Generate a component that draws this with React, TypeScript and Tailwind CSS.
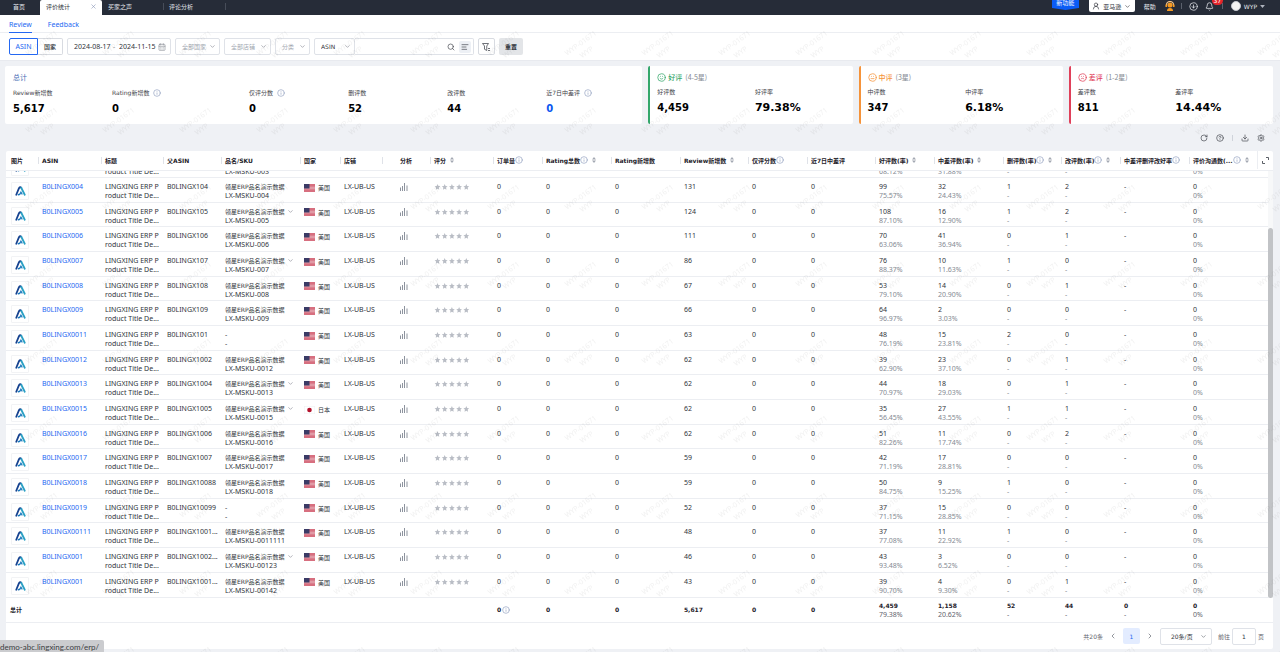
import React from "react";
import {
  Bell,
  ChevronDown,
  ChevronLeft,
  ChevronRight,
  CalendarDays,
  CircleArrowDown,
  CircleHelp,
  Download,
  Frown,
  Info,
  Meh,
  RotateCw,
  Search,
  Settings,
  Smile,
  TextAlignStart,
  UserRound,
  X,
} from "lucide-react";

type Row = {
  asin: string;
  parent: string;
  sku: string;
  more?: boolean;
  jp?: boolean;
  review: string;
  good: string[];
  bad: string[];
  del: string;
  edit: string;
};

const rows: Row[] = [
  {asin: "B0LINGX003", parent: "B0LINGX103", sku: "LX-MSKU-003", review: "138", good: ["94", "68.12%"], bad: ["44", "31.88%"], del: "1", edit: "1"},
  {asin: "B0LINGX004", parent: "B0LINGX104", sku: "LX-MSKU-004", review: "131", good: ["99", "75.57%"], bad: ["32", "24.43%"], del: "1", edit: "2"},
  {asin: "B0LINGX005", parent: "B0LINGX105", sku: "LX-MSKU-005", more: true, review: "124", good: ["108", "87.10%"], bad: ["16", "12.90%"], del: "1", edit: "2"},
  {asin: "B0LINGX006", parent: "B0LINGX106", sku: "LX-MSKU-006", review: "111", good: ["70", "63.06%"], bad: ["41", "36.94%"], del: "0", edit: "1"},
  {asin: "B0LINGX007", parent: "B0LINGX107", sku: "LX-MSKU-007", more: true, review: "86", good: ["76", "88.37%"], bad: ["10", "11.63%"], del: "1", edit: "0"},
  {asin: "B0LINGX008", parent: "B0LINGX108", sku: "LX-MSKU-008", review: "67", good: ["53", "79.10%"], bad: ["14", "20.90%"], del: "0", edit: "1"},
  {asin: "B0LINGX009", parent: "B0LINGX109", sku: "LX-MSKU-009", review: "66", good: ["64", "96.97%"], bad: ["2", "3.03%"], del: "0", edit: "0"},
  {asin: "B0LINGX0011", parent: "B0LINGX101", sku: "", review: "63", good: ["48", "76.19%"], bad: ["15", "23.81%"], del: "2", edit: "0"},
  {asin: "B0LINGX0012", parent: "B0LINGX1002", sku: "LX-MSKU-0012", review: "62", good: ["39", "62.90%"], bad: ["23", "37.10%"], del: "0", edit: "1"},
  {asin: "B0LINGX0013", parent: "B0LINGX1004", sku: "LX-MSKU-0013", more: true, review: "62", good: ["44", "70.97%"], bad: ["18", "29.03%"], del: "0", edit: "1"},
  {asin: "B0LINGX0015", parent: "B0LINGX1005", sku: "LX-MSKU-0015", more: true, jp: true, review: "62", good: ["35", "56.45%"], bad: ["27", "43.55%"], del: "1", edit: "1"},
  {asin: "B0LINGX0016", parent: "B0LINGX1006", sku: "LX-MSKU-0016", review: "62", good: ["51", "82.26%"], bad: ["11", "17.74%"], del: "0", edit: "2"},
  {asin: "B0LINGX0017", parent: "B0LINGX1007", sku: "LX-MSKU-0017", review: "59", good: ["42", "71.19%"], bad: ["17", "28.81%"], del: "0", edit: "0"},
  {asin: "B0LINGX0018", parent: "B0LINGX10088", sku: "LX-MSKU-0018", review: "59", good: ["50", "84.75%"], bad: ["9", "15.25%"], del: "1", edit: "0"},
  {asin: "B0LINGX0019", parent: "B0LINGX10099", sku: "", review: "52", good: ["37", "71.15%"], bad: ["15", "28.85%"], del: "0", edit: "0"},
  {asin: "B0LINGX00111", parent: "B0LINGX1001...", sku: "LX-MSKU-0011111", review: "48", good: ["37", "77.08%"], bad: ["11", "22.92%"], del: "1", edit: "0"},
  {asin: "B0LINGX001", parent: "B0LINGX1002...", sku: "LX-MSKU-00123", more: true, review: "46", good: ["43", "93.48%"], bad: ["3", "6.52%"], del: "0", edit: "0"},
  {asin: "B0LINGX001", parent: "B0LINGX1001...", sku: "LX-MSKU-00142", review: "43", good: ["39", "90.70%"], bad: ["4", "9.30%"], del: "0", edit: "1"},
];

const columns: {title: string; width: number; info?: boolean; sort?: boolean}[] = [
  {title: "图片", width: 32},
  {title: "ASIN", width: 63},
  {title: "标题", width: 62},
  {title: "父ASIN", width: 58},
  {title: "品名/SKU", width: 79},
  {title: "国家", width: 40},
  {title: "店铺", width: 42},
  {title: "分析", width: 48},
  {title: "评分", width: 63, sort: true},
  {title: "订单量", width: 49, info: true},
  {title: "Rating总数", width: 69, info: true, sort: true},
  {title: "Rating新增数", width: 69},
  {title: "Review新增数", width: 68, sort: true},
  {title: "仅评分数", width: 59, info: true},
  {title: "近7日中差评", width: 68},
  {title: "好评数(率)", width: 59, sort: true},
  {title: "中差评数(率)", width: 69, sort: true},
  {title: "删评数(率)", width: 58, info: true, sort: true},
  {title: "改评数(率)", width: 59, info: true, sort: true},
  {title: "中差评删评改好率", width: 69, info: true},
  {title: "评价沟通数(...", width: 68, info: true, sort: true},
  {title: "", width: 16},
];

const cjk = "font-['DejaVu_Sans','Noto_Sans_CJK_SC',sans-serif] text-[6px]";

const Cols = () => (
  <colgroup>
    {columns.map((c, i) => (
      <col key={i} style={{width: `${(c.width / 1267) * 100}%`}} />
    ))}
  </colgroup>
);

const InfoIcon = () => <Info size={8} strokeWidth={2} className="shrink-0 text-[#93a0bf]" />;

const Sort = () => (
  <svg viewBox="0 0 8 12" className="ml-1 h-[6px] w-[4px] shrink-0 fill-[#a3a8b2]">
    <path d="M4 0 8 5H0zM4 12 0 7h8z" />
  </svg>
);

const Logo = () => (
  <svg viewBox="0 0 22 20" className="h-[10px] w-[11px]">
    <path d="M2.500 17.500 8 4.500Q10 .5 12.500 3.500" fill="none" stroke="#16428f" strokeWidth="3.600" strokeLinecap="round" />
    <path d="M12.500 3.500 19.500 17.500" fill="none" stroke="#2ba0c4" strokeWidth="3.600" strokeLinecap="round" />
    <path d="M6.500 17.500Q10.500 17 12 12.500L14 16" fill="none" stroke="#1b78bd" strokeWidth="2.600" strokeLinecap="round" />
  </svg>
);

const Bars = () => (
  <svg viewBox="0 0 16 16" className="ml-[14px] mt-px h-[8px] w-[8px] fill-[#8d939e]">
    <path d="M0 9h2v7H0zM4 6h2v10H4zM8 0h2v16H8zM13 5h2v11h-2z" />
  </svg>
);

const FilterIcon = () => (
  <svg viewBox="0 0 18 16" className="h-[8px] w-[9px] fill-none stroke-[#4b4f57]" strokeWidth="1.600">
    <path d="M1 1h12L9.500 6v9L5 12.500V6z" />
    <path d="M12 11h4M12 15h4" />
  </svg>
);

const ExpandIcon = () => (
  <svg viewBox="0 0 14 14" className="h-[7px] w-[7px] fill-none stroke-[#4b4f57]" strokeWidth="1.800">
    <path d="M8 1h5v5M6 13H1V8" />
  </svg>
);

const Flag = ({jp}: {jp?: boolean}) =>
  jp ? (
    <svg viewBox="0 0 22 16" className="h-[8px] w-[11px]">
      <rect x=".5" y=".5" width="21" height="15" fill="#fff" stroke="#eef0f2" />
      <circle cx="11" cy="8" r="4.600" fill="#b3122c" />
    </svg>
  ) : (
    <svg viewBox="0 0 22 16" className="h-[8px] w-[11px]">
      <rect width="22" height="16" fill="#f0dfe2" />
      {[0, 1, 2, 3, 4, 5, 6].map((n) => (
        <rect key={n} y={n * 2.45} width="22" height="1.300" fill="#c9324a" />
      ))}
      <rect width="11" height="9" fill="#3a3b66" />
    </svg>
  );

const Stars = () => (
  <svg viewBox="0 0 72 12" className="mt-[2px] h-[6px] w-[36px] fill-[#b9bdc5]">
    {[0, 1, 2, 3, 4].map((n) => (
      <path
        key={n}
        transform={`translate(${n * 14.4 + 1} 0)`}
        d="M6 0l1.700 3.800 4.100.5-3 2.900.7 4.100L6 9.300l-3.500 2 .7-4.100-3-2.900 4.100-.5z"
      />
    ))}
  </svg>
);

const Pair = ({top, sub}: {top: string; sub: string}) => (
  <>
    <div>{top}</div>
    <div className="text-[#858a93]">{sub}</div>
  </>
);

const Select = ({label, width, dark}: {label: string; width: string; dark?: boolean}) => (
  <div className={`relative h-[17px] ${width}`}>
    <select
      aria-label={label}
      className={`h-full w-full appearance-none rounded-[2px] border border-[#dfe2e8] bg-white pl-[6px] outline-none ${
        dark ? "text-[#30343b]" : "text-[#a3a8b2]"
      } ${cjk}`}
    >
      <option>{label}</option>
    </select>
    <ChevronDown size={7} className="pointer-events-none absolute right-[4px] top-[5px] text-[#7d828c]" />
  </div>
);

const Stat = ({label, value, info, blue}: {label: string; value: string; info?: boolean; blue?: boolean}) => (
  <div>
    <div className={`flex h-[9px] items-center gap-1 text-[#3f434a] ${cjk}`}>
      {label}
      {info && <InfoIcon />}
    </div>
    <div
      className={`mt-[5px] font-['DejaVu_Sans',sans-serif] font-bold leading-[14px] ${
        value.endsWith("%") ? "text-[11px]" : "text-[10px]"
      } ${blue ? "text-[#0b57f0]" : "text-black"}`}
    >
      {value}
    </div>
  </div>
);

const RateCard = ({
  title,
  range,
  tone,
  icon,
  count,
  rate,
}: {
  title: string;
  range: string;
  tone: string;
  icon: React.ReactNode;
  count: string;
  rate: string;
}) => (
  <section className={`rounded-[2px] border-l-2 bg-white pl-[7px] pt-[6px] ${tone}`}>
    <h2 className="flex h-[11px] items-center gap-[2px] font-['Noto_Sans_CJK_SC',sans-serif] text-[7px] font-medium">
      {icon}
      {title}
      <span className="pl-px font-normal text-[#858a93]">({range})</span>
    </h2>
    <div className="mt-[4px] grid grid-cols-2">
      <Stat label={`${title}数`} value={count} />
      <Stat label={`${title}率`} value={rate} />
    </div>
  </section>
);

const TopBar = () => (
  <header className={`flex h-[15px] items-start overflow-hidden bg-[#262c38] text-[#e4e7ec] ${cjk}`}>
    <nav className="flex h-full items-start leading-[13px]">
      <a href="#home" className="w-[40px] pl-[13px]">首页</a>
      <div className="flex h-full w-[62px] justify-between rounded-t-[2px] bg-white pl-[6px] pr-[5px] text-[#30343b]">
        <a href="#stats">评价统计</a>
        <button aria-label="关闭" className="h-[13px] text-[#8492b5]">
          <X size={7} />
        </button>
      </div>
      <a href="#voice" className="w-[61px] pl-[6px]">买家之声</a>
      <span className="mt-[3px] h-[7px] w-px bg-[#474d59]" />
      <a href="#analysis" className="w-[61px] pl-[5px]">评论分析</a>
      <span className="mt-[3px] h-[7px] w-px bg-[#474d59]" />
    </nav>
    <div className="ml-auto flex h-[12px] items-center pr-[15px]">
      <button className="relative mr-[10px] h-[10px] w-[27px] self-start text-white">
        <svg viewBox="0 0 27 10" className="absolute inset-0 h-full w-full fill-[#0b5cf5]">
          <path d="M0 0H27V8L13.500 10 0 8z" />
        </svg>
        <span className="relative block h-[10px] leading-[5px]">新功能</span>
      </button>
      <button className="mr-[9px] flex h-[12px] w-[46px] items-center justify-center gap-[3px] rounded-b-[2px] bg-white text-[#30343b]">
        <UserRound size={8} />
        亚马逊
        <ChevronDown size={7} />
      </button>
      <a href="#help" className="mr-[9px]">帮助</a>
      <svg viewBox="0 0 20 20" className="mr-[6px] h-[10px] w-[10px]">
        <path d="M3 11V8a7 7 0 0 1 14 0v3" fill="none" stroke="#f3c58c" strokeWidth="2.500" />
        <circle cx="10" cy="8" r="5" fill="#f59a23" />
        <path d="M4 20q0-6 6-6t6 6z" fill="#f59a23" />
        <path d="M1 7h3v5H1zM16 7h3v5h-3z" fill="#f59a23" />
      </svg>
      <span className="mr-[7px] h-[6px] w-px bg-[#5b616d]" />
      <CircleArrowDown size={9} className="mr-[7px]" />
      <div className="relative mr-[8px]">
        <Bell size={9} />
        <span className="absolute -top-[6px] left-[7px] h-[9px] w-[11px] rounded-full bg-[#e5252b] text-center leading-[9px] text-white">
          37
        </span>
      </div>
      <span className="mr-[8px] h-[6px] w-px bg-[#5b616d]" />
      <span className="mr-[3px] h-[10px] w-[10px] rounded-full border border-[#c4c8cf] bg-[#f4f4f4]" />
      <button className="flex items-center gap-[3px]">
        WYP
        <svg viewBox="0 0 8 5" className="h-[3px] w-[5px] fill-[#aeb3bd]">
          <path d="M0 0h8L4 5z" />
        </svg>
      </button>
    </div>
  </header>
);

const Filters = () => (
  <div className="flex items-center gap-1 border-b border-[#e8eaef] bg-white px-[9px] py-[5px]">
    <div className="flex h-[17px]">
      <button className="w-[29px] rounded-l-[2px] border border-[#2468f2] text-[#2468f2]">ASIN</button>
      <button className={`w-[25px] rounded-r-[2px] border border-l-0 border-[#d8dbe1] font-medium text-[#30343b] ${cjk}`}>国家</button>
    </div>
    <div className="flex h-[17px] w-[104px] items-center rounded-[2px] border border-[#dfe2e8] pl-[6px] text-[#30343b]">
      <input aria-label="开始日期" defaultValue="2024-08-17" className="w-[39px] outline-none" />
      <span className="w-[6px] text-[#8f949c]">-</span>
      <input aria-label="结束日期" defaultValue="2024-11-15" className="w-[39px] outline-none" />
      <CalendarDays size={8} className="text-[#8f949c]" />
    </div>
    <Select label="全部国家" width="w-[45px]" />
    <Select label="全部店铺" width="w-[47px]" />
    <Select label="分类" width="w-[35px]" />
    <div className="flex">
      <Select label="ASIN" width="w-[41px]" dark />
      <div className="flex h-[17px] w-[119px] items-center rounded-r-[2px] border border-l-0 border-[#dfe2e8] pr-[2px]">
        <input aria-label="搜索" className="w-0 flex-1 outline-none" />
        <button aria-label="查询" className="mr-[4px] text-[#3f434a]">
          <Search size={8} />
        </button>
        <button aria-label="批量搜索" className="flex h-[12px] w-[12px] items-center justify-center rounded-[2px] bg-[#edf0f5] text-[#3f434a]">
          <TextAlignStart size={8} />
        </button>
      </div>
    </div>
    <button aria-label="筛选" className="flex h-[17px] w-[17px] items-center justify-center rounded-[2px] border border-[#d8dbe1]">
      <FilterIcon />
    </button>
    <button className={`h-[17px] w-[24px] rounded-[2px] bg-[#e3e5e8] font-bold text-[#30343b] ${cjk}`}>重置</button>
  </div>
);

const TableHead = () => (
  <table className="w-full table-fixed">
    <Cols />
    <thead>
      <tr className={`h-[19px] border-b border-[#eceef2] text-left text-[#1d2129] ${cjk}`}>
        {columns.map((c, i) => (
          <th key={i} className="p-0">
            {c.title ? (
              <div className="flex items-center whitespace-nowrap">
                <span className={`h-[7px] w-px shrink-0 ${i ? "mr-[3px] bg-[#dfe2e8]" : "mr-1"}`} />
                <span className={c.title === "分析" ? "pl-[14px]" : ""}>{c.title}</span>
                {c.info && <InfoIcon />}
                {c.sort && <Sort />}
              </div>
            ) : (
              <button aria-label="展开" className="flex h-[18px] w-full items-center justify-center border-l border-[#eceef2]">
                <ExpandIcon />
              </button>
            )}
          </th>
        ))}
      </tr>
    </thead>
  </table>
);

const TableBody = () => (
  <div className="relative flex h-[427px] flex-col justify-end overflow-hidden">
    <table className="h-[444px] w-full shrink-0 table-fixed leading-[9px] text-[#30343b]">
      <Cols />
      <tbody>
        {rows.map((r, i) => (
          <tr key={i} className="border-b border-[#eceef2] align-top [&>td]:whitespace-nowrap [&>td]:pb-0 [&>td]:pl-1 [&>td]:pt-1">
            <td>
              <div className="ml-px flex h-[18px] w-[18px] items-center justify-center rounded-[1px] border border-[#f2f3f5]">
                <Logo />
              </div>
            </td>
            <td>
              <a href={`#${r.asin}`} className="text-[#2468f2]">{r.asin}</a>
            </td>
            <td>
              <div>LINGXING ERP P</div>
              <div>roduct Title De...</div>
            </td>
            <td>{r.parent}</td>
            <td>
              {r.sku ? (
                <>
                  <div className={`flex items-center gap-[2px] ${cjk}`}>
                    领星ERP品名演示数据
                    {r.more && <ChevronDown size={7} strokeWidth={2} className="shrink-0 text-[#7d828c]" />}
                  </div>
                  <div>{r.sku}</div>
                </>
              ) : (
                <>
                  <div>-</div>
                  <div>-</div>
                </>
              )}
            </td>
            <td>
              <div className={`flex items-center gap-[3px] pt-px ${cjk}`}>
                <Flag jp={r.jp} />
                {r.jp ? "日本" : "美国"}
              </div>
            </td>
            <td>LX-UB-US</td>
            <td>
              <Bars />
            </td>
            <td>
              <Stars />
            </td>
            <td>0</td>
            <td>0</td>
            <td>0</td>
            <td>{r.review}</td>
            <td>0</td>
            <td>0</td>
            <td><Pair top={r.good[0]} sub={r.good[1]} /></td>
            <td><Pair top={r.bad[0]} sub={r.bad[1]} /></td>
            <td><Pair top={r.del} sub="-" /></td>
            <td><Pair top={r.edit} sub="-" /></td>
            <td>-</td>
            <td><Pair top="0" sub="0%" /></td>
            <td />
          </tr>
        ))}
      </tbody>
    </table>
    <div className="absolute bottom-0 right-0 top-0 flex w-[5px] items-end bg-[#f7f8f9]">
      <div className="h-[370px] w-full rounded-full bg-[#c1c3c6]" />
    </div>
  </div>
);

const totals = ["0", "0", "0", "5,617", "0", "0"];
const pairs = [["4,459", "79.38%"], ["1,158", "20.62%"], ["52", "-"], ["44", "-"], ["0", "-"], ["0", "0%"]];

const TableFoot = () => (
  <table className="w-full table-fixed leading-[9px]">
    <Cols />
    <tbody>
      <tr className={`h-[25px] border-b border-[#eceef2] text-[#1d2129] [&>td]:p-0 [&>td]:pl-1 ${cjk}`}>
        <td colSpan={9} className="font-bold">总计</td>
        {totals.map((t, i) => (
          <td key={i} className="font-bold">
            <div className="flex items-center gap-px">
              {t}
              {i === 0 && <InfoIcon />}
            </div>
          </td>
        ))}
        {pairs.map(([top, sub], i) => (
          <td key={i}>
            <div className="font-bold">{top}</div>
            <div className="font-['Noto_Sans',sans-serif] text-[7px] text-[#5f646d]">{sub}</div>
          </td>
        ))}
        <td />
      </tr>
    </tbody>
  </table>
);

const Pagination = () => (
  <div className={`flex h-[26px] items-center justify-end pr-[9px] text-[#5f646d] ${cjk}`}>
    <span>共20条</span>
    <button aria-label="上一页" className="ml-[6px] mr-[6px]">
      <ChevronLeft size={8} />
    </button>
    <button className="h-[16px] w-[17px] rounded-[2px] bg-[#e3ecff] text-[#2468f2]">1</button>
    <button aria-label="下一页" className="ml-[6px] mr-[6px]">
      <ChevronRight size={8} />
    </button>
    <div className="relative mr-[6px]">
      <select aria-label="每页条数" className="h-[17px] w-[52px] appearance-none rounded-[2px] border border-[#dfe2e8] pl-[10px] text-[#30343b] outline-none">
        <option>20条/页</option>
      </select>
      <ChevronDown size={7} className="pointer-events-none absolute right-[5px] top-[5px]" />
    </div>
    <label className="flex items-center gap-[2px]">
      前往
      <input defaultValue="1" className="h-[17px] w-[24px] rounded-[2px] border border-[#dfe2e8] text-center text-[#30343b] outline-none" />
      页
    </label>
  </div>
);

const Watermark = () => (
  <svg aria-hidden="true" className="pointer-events-none absolute bottom-0 left-0 right-0 top-[15px] h-full w-full">
    <defs>
      <pattern id="wm" width="77" height="77" patternUnits="userSpaceOnUse">
        <g fill="#000" fillOpacity=".06" fontSize="7" fontFamily="Noto Sans, sans-serif" textAnchor="middle">
          <text transform="translate(43 30) rotate(-36)">WYP-01671</text>
          <text transform="translate(49 39) rotate(-36)">WYP</text>
        </g>
      </pattern>
    </defs>
    <rect width="100%" height="100%" fill="url(#wm)" />
  </svg>
);

const App = () => {
  return (
    <div className="relative min-h-screen overflow-hidden bg-[#eff1f5] font-['Noto_Sans','Noto_Sans_CJK_SC',sans-serif] text-[7px] leading-[9px]">
      <TopBar />
      <nav className="flex h-[18px] gap-[16px] border-b border-[#eceef2] bg-white pl-[9px] leading-[19px] text-[#2468f2]">
        <a href="#review" className="h-[18px] border-b border-[#2468f2]">Review</a>
        <a href="#feedback">Feedback</a>
      </nav>
      <Filters />
      <main className="pb-[3px] pl-[5px] pr-[7px] pt-[5px]">
        <div className="grid grid-cols-[3.12fr_1fr_1fr_1fr] gap-[6px]">
          <section className="h-[58px] rounded-[2px] bg-white pl-2 pt-[6px]">
            <h2 className="h-[11px] font-['Noto_Sans_CJK_SC',sans-serif] text-[7px] leading-[11px] text-[#4a6fb5]">总计</h2>
            <div className="mt-[5px] grid grid-cols-[99fr_137fr_99fr_99fr_99fr_96fr]">
              <Stat label="Review新增数" value="5,617" />
              <Stat label="Rating新增数" value="0" info />
              <Stat label="仅评分数" value="0" info />
              <Stat label="删评数" value="52" />
              <Stat label="改评数" value="44" />
              <Stat label="近7日中差评" value="0" info blue />
            </div>
          </section>
          <RateCard title="好评" range="4-5星" tone="border-[#34a76b] text-[#34a76b]" icon={<Smile size={9} />} count="4,459" rate="79.38%" />
          <RateCard title="中评" range="3星" tone="border-[#f5933a] text-[#f5933a]" icon={<Meh size={9} />} count="347" rate="6.18%" />
          <RateCard title="差评" range="1-2星" tone="border-[#e0405a] text-[#e0405a]" icon={<Frown size={9} />} count="811" rate="14.44%" />
        </div>
        <div className="flex h-[27px] items-center justify-end gap-[8px] pr-[8px] text-[#3f434a]">
          <button aria-label="刷新"><RotateCw size={8} /></button>
          <button aria-label="帮助"><CircleHelp size={8} /></button>
          <span className="h-[6px] w-px bg-[#cfd3da]" />
          <button aria-label="下载"><Download size={8} /></button>
          <button aria-label="设置"><Settings size={8} /></button>
        </div>
        <section className="ml-px rounded-[2px] bg-white">
          <TableHead />
          <TableBody />
          <TableFoot />
          <Pagination />
        </section>
      </main>
      <Watermark />
      <div className="absolute bottom-0 left-0 h-[12px] rounded-tr-[2px] bg-[#cbcccf] pr-[5px] font-['Lato',sans-serif] text-[8px] leading-[14px] text-[#3c4043]">
        demo-abc.lingxing.com/erp/
      </div>
    </div>
  );
};

export default App;
